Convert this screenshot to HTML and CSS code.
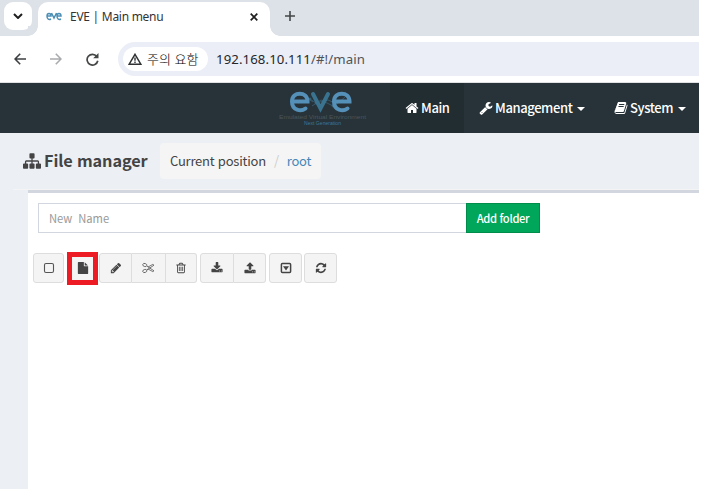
FILE: index.html
```html
<!DOCTYPE html>
<html lang="ko">
<head>
<meta charset="utf-8">
<title>EVE | Main menu</title>
<link rel="stylesheet" href="styles.css">
</head>
<body>
<div class="window">
  <div class="tabs">
    <div class="tab-search"><svg width="10" height="6" viewBox="0 0 10 6"><path d="M1 1l4 4 4-4" fill="none" stroke="#1f1f1f" stroke-width="2"/></svg></div>
    <div class="tab">
      <svg class="favicon" width="16" height="9" viewBox="0 0 16 9" fill="none" stroke="#4d8fb5" stroke-width="1.5"><path d="M1 4h4C5 .5 1 .5 1 4s2 4 4 3M5.500 1L8 6l2.500-5M11 4h4c0-3.500-4-3.500-4 0s2 4 4 3"/></svg>
      <span class="tab-title">EVE | Main menu</span>
      <svg class="tab-close" width="8" height="8" viewBox="0 0 8 8"><path d="M.7.7l6.600 6.600M7.300.7L.7 7.300" stroke="#1f1f1f" stroke-width="1.700"/></svg>
    </div>
    <svg class="tab-new" width="10" height="10" viewBox="0 0 10 10"><path d="M5 0v10M0 5h10" stroke="#444746" stroke-width="1.600"/></svg>
  </div>
  <div class="toolbar">
    <svg class="nav-arrow" width="12" height="12" viewBox="0 0 12 12" fill="none" stroke="#3c3f41" stroke-width="1.600"><path d="M12 6H1.200M6.200.7L1 6l5.200 5.300"/></svg>
    <svg class="nav-arrow" width="12" height="12" viewBox="0 0 12 12" fill="none" stroke="#a9abad" stroke-width="1.600"><path d="M0 6h10.800M5.800.7L11 6l-5.200 5.300"/></svg>
    <svg class="nav-reload" width="13" height="13" viewBox="0 0 13 13"><path d="M10.800 3.400A5.400 5.400 0 1 0 11.800 7.800" fill="none" stroke="#444746" stroke-width="1.700"/><path d="M12.500 0v5.300H7.200z" fill="#444746"/></svg>
    <div class="omnibox">
      <div class="warning">
        <svg width="14" height="12" viewBox="0 0 14 12"><path d="M7 1.300L12.800 11.200H1.200z" fill="none" stroke="#303234" stroke-width="1.500"/><path d="M7 4.500v3.300M7 8.600v1.400" stroke="#303234" stroke-width="1.400"/></svg>
        <span>주의 요함</span>
      </div>
      <span class="url"><b>192.168.10.111</b>/#!/main</span>
    </div>
  </div>

  <nav class="navbar">
    <a class="brand">
      <svg width="90" height="38" viewBox="0 0 90 38">
        <g stroke="#3c6074" stroke-width=".8" fill="#3c6074"><path d="M20 14l12-4 6 4 12-3 9 4 8-7M34 17l9-6 12 6M23 5l12 8" fill="none"/><circle cx="32" cy="10" r="1"/><circle cx="55" cy="17" r="1"/><circle cx="38" cy="14" r="1"/></g>
        <g fill="none" stroke="#5590b8" stroke-width="4" stroke-linecap="round"><path d="M15 12.500h14.500C29.500 2 14 2 14 12.500c0 9 9 10.500 13.500 7"/><path d="M57 12.500h14.500C71.500 2 56 2 56 12.500c0 9 9 10.500 13.500 7"/><path d="M35 5l7.500 14.500L50 5" stroke="#397390"/></g>
        <text x="1" y="29.500" textLength="87" lengthAdjust="spacingAndGlyphs" class="brand-main">Emulated Virtual Environment</text>
        <text x="26" y="35.500" textLength="37" lengthAdjust="spacingAndGlyphs" class="brand-sub">Next Generation</text>
      </svg>
    </a>
    <a class="nav-item active"><svg width="14" height="14" viewBox="0 0 1792 1792"><path d="M1472 992v480q0 26-19 45t-45 19h-384v-384h-256v384h-384q-26 0-45-19t-19-45v-480q0-1 .5-3t.5-3l575-474 575 474q1 2 1 6zm223-69l-62 74q-8 9-21 11h-3q-13 0-21-7l-692-577-692 577q-12 8-24 7-13-2-21-11l-62-74q-8-10-7-23.500t11-21.500l719-599q32-26 76-26t76 26l244 204v-195q0-14 9-23t23-9h192q14 0 23 9t9 23v408l219 182q10 8 11 21.500t-7 23.500z"/></svg><span>Main</span></a>
    <a class="nav-item management"><svg width="14" height="14" viewBox="0 0 1792 1792"><path d="M448 1472q0-26-19-45t-45-19-45 19-19 45 19 45 45 19 45-19 19-45zm644-420l-682 682q-37 37-90 37-52 0-91-37l-106-108q-38-36-38-90 0-53 38-91l681-681q39 98 114.500 173.500t173.500 114.500zm634-435q0 39-23 106-47 134-164.500 217.500t-258.500 83.500q-185 0-316.500-131.500t-131.500-316.500 131.500-316.500 316.500-131.500q58 0 121.500 16.500t107.500 46.500q16 11 16 28t-16 28l-293 169v224l193 107q5-3 79-48.500t135.500-81 70.500-35.500q15 0 23.500 10t8.500 25z"/></svg><span>Management</span><i class="caret"></i></a>
    <a class="nav-item system"><svg width="14" height="14" viewBox="0 0 1792 1792"><path d="M1703 478q40 57 18 129l-275 906q-19 64-76.500 107.500t-122.500 43.500h-923q-77 0-148.500-53.500t-99.500-131.500q-24-67-2-127 0-4 3-27t4-37q1-8-3-21.500t-3-19.500q2-11 8-21t16.500-23.500 16.500-23.500q23-38 45-91.500t30-91.500q3-10 .5-30t-.5-28q3-11 17-28t17-23q21-36 42-92t25-90q1-9-2.500-32t.5-28q4-13 22-30.500t22-22.500q19-26 42.500-84.500t27.500-96.500q1-8-3-25.500t-2-26.500q2-8 9-18t18-23 17-21q8-12 16.500-30.500t15-35 16-36 19.500-32 26.500-23.500 36-11.500 47.500 5.500l-1 3q38-9 51-9h761q74 0 114 56t18 130l-274 906q-36 119-71.500 153.500t-128.500 34.500h-869q-27 0-38 15-11 16-1 43 24 70 144 70h923q29 0 56-15.500t35-41.500l300-987q7-22 5-57 38 15 59 43zm-1064 2q-4 13 2 22.500t20 9.500h608q13 0 25.500-9.500t16.500-22.500l21-64q4-13-2-22.500t-20-9.500h-608q-13 0-25.500 9.500t-16.500 22.500zm-83 256q-4 13 2 22.500t20 9.500h608q13 0 25.500-9.500t16.500-22.500l21-64q4-13-2-22.500t-20-9.500h-608q-13 0-25.500 9.500t-16.500 22.500z"/></svg><span>System</span><i class="caret"></i></a>
  </nav>

  <main class="content">
    <header class="page-head">
      <svg width="18" height="18" viewBox="0 0 1792 1792"><path d="M1792 1248v320q0 40-28 68t-68 28h-320q-40 0-68-28t-28-68v-320q0-40 28-68t68-28h96v-192h-512v192h96q40 0 68 28t28 68v320q0 40-28 68t-68 28h-320q-40 0-68-28t-28-68v-320q0-40 28-68t68-28h96v-192h-512v192h96q40 0 68 28t28 68v320q0 40-28 68t-68 28h-320q-40 0-68-28t-28-68v-320q0-40 28-68t68-28h96v-192q0-52 38-90t90-38h512v-192h-96q-40 0-68-28t-28-68v-320q0-40 28-68t68-28h320q40 0 68 28t28 68v320q0 40-28 68t-68 28h-96v192h512q52 0 90 38t38 90v192h96q40 0 68 28t28 68z"/></svg>
      <h1>File manager</h1>
      <div class="breadcrumb"><span>Current position</span><span class="slash">/</span><a>root</a></div>
    </header>
    <section class="box">
      <div class="folder-form">
        <input type="text" placeholder="New  Name">
        <button class="add">Add folder</button>
      </div>
      <div class="actions">
        <button class="btn check"><svg width="12" height="12" viewBox="0 0 12 12"><rect x="1.500" y="1.500" width="9" height="9" rx="1.500" fill="none" stroke="#555" stroke-width="1.100"/></svg></button>
        <button class="btn file"><svg width="12" height="12" viewBox="0 0 1792 1792"><path d="M1152 512v-472q22 14 36 28l408 408q14 14 28 36h-472zm-128 32q0 40 28 68t68 28h544v1056q0 40-28 68t-68 28h-1344q-40 0-68-28t-28-68v-1600q0-40 28-68t68-28h800v544z"/></svg></button>
        <div class="group">
          <button class="btn first"><svg width="12" height="12" viewBox="0 0 1792 1792"><path d="M491 1536l91-91-235-235-91 91v107h128v128h107zm523-928q0-22-22-22-10 0-17 7l-542 542q-7 7-7 17 0 22 22 22 10 0 17-7l542-542q7-7 7-17zm-54-192l416 416-832 832h-416v-416zm683 96q0 53-37 90l-166 166-416-416 166-165q36-38 90-38 53 0 91 38l235 234q37 39 37 91z"/></svg></button>
          <button class="btn middle"><svg class="line" width="13" height="12" viewBox="0 0 13 12"><ellipse cx="2.800" cy="3" rx="2.100" ry="1.500" transform="rotate(20 2.800 3)"/><ellipse cx="2.800" cy="9" rx="2.100" ry="1.500" transform="rotate(-20 2.800 9)"/><path d="M4.700 4L12 8.800l-1.200.8L6 7 4.700 8M4.700 8L12 3.200l-1.200-.8L6 5"/></svg></button>
          <button class="btn last"><svg width="12" height="12" viewBox="0 0 1792 1792"><path d="M704 736v576q0 14-9 23t-23 9h-64q-14 0-23-9t-9-23v-576q0-14 9-23t23-9h64q14 0 23 9t9 23zm256 0v576q0 14-9 23t-23 9h-64q-14 0-23-9t-9-23v-576q0-14 9-23t23-9h64q14 0 23 9t9 23zm256 0v576q0 14-9 23t-23 9h-64q-14 0-23-9t-9-23v-576q0-14 9-23t23-9h64q14 0 23 9t9 23zm128 724v-948h-896v948q0 22 7 40.500t14.500 27 10.500 8.500h832q3 0 10.500-8.500t14.500-27 7-40.500zm-672-1076h448l-48-117q-7-9-17-11h-317q-10 2-17 11zm928 32v64q0 14-9 23t-23 9h-96v948q0 83-47 143.500t-113 60.500h-832q-66 0-113-58.500t-47-141.500v-952h-96q-14 0-23-9t-9-23v-64q0-14 9-23t23-9h309l70-167q15-37 54-63t79-26h320q40 0 79 26t54 63l70 167h309q14 0 23 9t9 23z"/></svg></button>
        </div>
        <div class="group transfer">
          <button class="btn first"><svg width="12" height="12" viewBox="0 0 1792 1792"><path d="M1344 1344q0-26-19-45t-45-19-45 19-19 45 19 45 45 19 45-19 19-45zm256 0q0-26-19-45t-45-19-45 19-19 45 19 45 45 19 45-19 19-45zm128-224v320q0 40-28 68t-68 28h-1472q-40 0-68-28t-28-68v-320q0-40 28-68t68-28h465l135 136q58 56 136 56t136-56l136-136h464q40 0 68 28t28 68zm-325-569q17 41-14 70l-448 448q-18 19-45 19t-45-19l-448-448q-31-29-14-70 17-39 59-39h256v-448q0-26 19-45t45-19h256q26 0 45 19t19 45v448h256q42 0 59 39z"/></svg></button>
          <button class="btn last"><svg width="12" height="12" viewBox="0 0 1792 1792"><path d="M1344 1472q0-26-19-45t-45-19-45 19-19 45 19 45 45 19 45-19 19-45zm256 0q0-26-19-45t-45-19-45 19-19 45 19 45 45 19 45-19 19-45zm128-224v320q0 40-28 68t-68 28h-1472q-40 0-68-28t-28-68v-320q0-40 28-68t68-28h427q21 56 70.500 92t110.500 36h256q61 0 110.500-36t70.500-92h427q40 0 68 28t28 68zm-325-648q-17 40-59 40h-256v448q0 26-19 45t-45 19h-256q-26 0-45-19t-19-45v-448h-256q-42 0-59-40-17-39 14-69l448-448q18-19 45-19t45 19l448 448q31 30 14 69z"/></svg></button>
        </div>
        <button class="btn gap-wide"><svg width="12" height="12" viewBox="0 0 12 12"><rect x="1.400" y="1.400" width="9.200" height="9.200" rx="1" fill="none" stroke="#444" stroke-width="1.500"/><path d="M3 4.200h6L6 8.400z"/></svg></button>
        <button class="btn gap"><svg width="12" height="12" viewBox="0 0 1792 1792"><path d="M1639 1056q0 5-1 7-64 268-268 434.500t-478 166.500q-146 0-282.500-55t-243.500-157l-129 129q-19 19-45 19t-45-19-19-45v-448q0-26 19-45t45-19h448q26 0 45 19t19 45-19 45l-137 137q71 66 161 102t187 36q134 0 250-65t186-179q11-17 53-117 8-23 30-23h192q13 0 22.500 9.500t9.500 22.500zm25-800v448q0 26-19 45t-45 19h-448q-26 0-45-19t-19-45 19-45l138-138q-148-137-349-137-134 0-250 65t-186 179q-11 17-53 117-8 23-30 23h-199q-13 0-22.500-9.500t-9.500-22.500v-7q65-268 270-434.500t480-166.500q146 0 284 55.500t245 156.500l130-129q19-19 45-19t45 19 19 45z"/></svg></button>
      </div>
    </section>
  </main>
</div>
</body>
</html>
```
FILE: styles.css
```css
* { box-sizing: border-box; }
body { margin: 0; background: #fff; font-family: "Noto Sans CJK KR", sans-serif; }
svg { display: block; flex: none; }
button, input { font-family: inherit; margin: 0; }
.window { width: 699px; height: 489px; overflow: hidden; display: flex; flex-direction: column; }

.tabs { height: 36px; flex: none; display: flex; background: #dde1e8; padding-top: 2px; }
.tab-search { width: 28px; height: 28px; margin: 0 6px 0 4px; border-radius: 9px; background: #fff; display: flex; align-items: center; justify-content: center; }
.tab { position: relative; width: 232px; height: 34px; border-radius: 10px 10px 0 0; background: #fff; display: flex; align-items: center; padding: 0 12px 5px 8px; }
.tab::before, .tab::after { content: ""; position: absolute; bottom: 0; width: 10px; height: 10px; }
.tab::before { left: -10px; background: radial-gradient(circle at 0 0, #dde1e8 9.5px, #fff 10px); }
.tab::after { right: -10px; background: radial-gradient(circle at 100% 0, #dde1e8 9.5px, #fff 10px); }
.tab-title { margin-left: 8px; font: 12px "Noto Sans", sans-serif; letter-spacing: -.27px; color: #333; white-space: pre; }
.tab-close { margin-left: auto; }
.tab-new { margin: 9px 0 0 15px; }

.toolbar { height: 46px; flex: none; display: flex; align-items: center; padding-left: 14px; background: #fff; }
.nav-arrow { margin-right: 24px; }
.nav-reload { margin-right: 19px; }
.omnibox { flex: 1; height: 34px; border-radius: 17px 0 0 17px; background: #ebeef7; display: flex; align-items: center; padding-left: 5px; }
.warning { width: 85px; height: 24px; border-radius: 12px; background: #fff; display: flex; align-items: center; padding: 0 0 1px 5px; gap: 5px; font-size: 13px; font-weight: 300; color: #000; white-space: nowrap; }
.url { margin-left: 8px; font: 13.2px "Noto Sans", sans-serif; letter-spacing: .1px; color: #505356; }
.url b { font-weight: 400; color: #25282b; }

.navbar { height: 51px; flex: none; border-top: 1px solid #dfe1e2; display: flex; background: #273339; }
.brand { width: 390px; padding: 6px 0 0 278px; }
.brand-main { font: 6px "Liberation Sans", sans-serif; fill: #4b565b; }
.brand-sub { font: 4.5px "Liberation Sans", sans-serif; fill: #3c7898; }
.nav-item { display: flex; align-items: center; color: #fff; fill: #fff; font-size: 13px; font-weight: 500; letter-spacing: -.4px; white-space: nowrap; gap: 2px; padding-bottom: 1px; }
.active { width: 74px; padding-left: 15px; background: #222d32; }
.management { width: 135px; padding-left: 15px; }
.system { padding-left: 15px; }
.caret { margin: 3px 0 0 3px; border: 4px solid transparent; border-top-color: #fff; border-bottom: 0; }

.content { flex: 1; background: #ecf0f5; display: flex; flex-direction: column; }
.page-head { height: 57px; margin-left: 13px; border-bottom: 1px solid #f4f4f4; padding: 0 0 1px 10px; display: flex; align-items: center; color: #444; fill: #444; }
h1 { margin: -2px 0 0 3px; width: 116px; font-size: 16.3px; line-height: 24px; font-weight: 700; letter-spacing: -.12px; white-space: nowrap; }
.breadcrumb { height: 36px; width: 161px; border-radius: 4px; background: #f5f5f5; display: flex; align-items: center; padding-left: 10px; font-size: 13px; letter-spacing: -.23px; white-space: nowrap; }
.slash { color: #ccc; margin: 0 8px; }
.breadcrumb a { color: #4688b8; }

.box { flex: 1; margin-left: 28px; background: #fff; border-top: 3px solid #d2d6de; padding: 10px 0 0 5px; }
.folder-form { display: flex; padding-left: 5px; }
.folder-form input { width: 428px; height: 30px; border: 1px solid #d2d6de; border-right: 0; padding: 0 10px; font-size: 11.2px; letter-spacing: -.05px; outline: 0; }
.folder-form input::placeholder { color: #999; }
.add { width: 74px; height: 30px; padding: 0 0 1px; border: 1px solid #008d4c; background: #00a65a; color: #fff; font-size: 11.2px; font-weight: 500; letter-spacing: -.35px; }
.actions { display: flex; align-items: center; margin-top: 17px; height: 36px; }
.btn { width: 33px; height: 30px; padding: 0; border: 1px solid #ddd; border-radius: 3px; background: #f4f4f4; display: flex; align-items: center; justify-content: center; fill: #444; }
.check { width: 31px; }
.file { height: 33px; width: 31px; margin: 1px 1px 0 3px; border: 5px solid #ed1c24; border-radius: 0; }
.file svg { margin: -2px 0 0 1px; }
.group { display: flex; }
.first { border-radius: 3px 0 0 3px; }
.middle { width: 34px; border-left: 0; border-radius: 0; }
.last { width: 31px; border-left: 0; border-radius: 0 3px 3px 0; }
.transfer { margin-left: 3px; }
.transfer .first { width: 34px; }
.transfer .last { width: 32px; }
.gap { margin-left: 2px; }
.gap-wide { margin-left: 3px; }
.line { fill: none; stroke: #666; stroke-width: .9; }
```
